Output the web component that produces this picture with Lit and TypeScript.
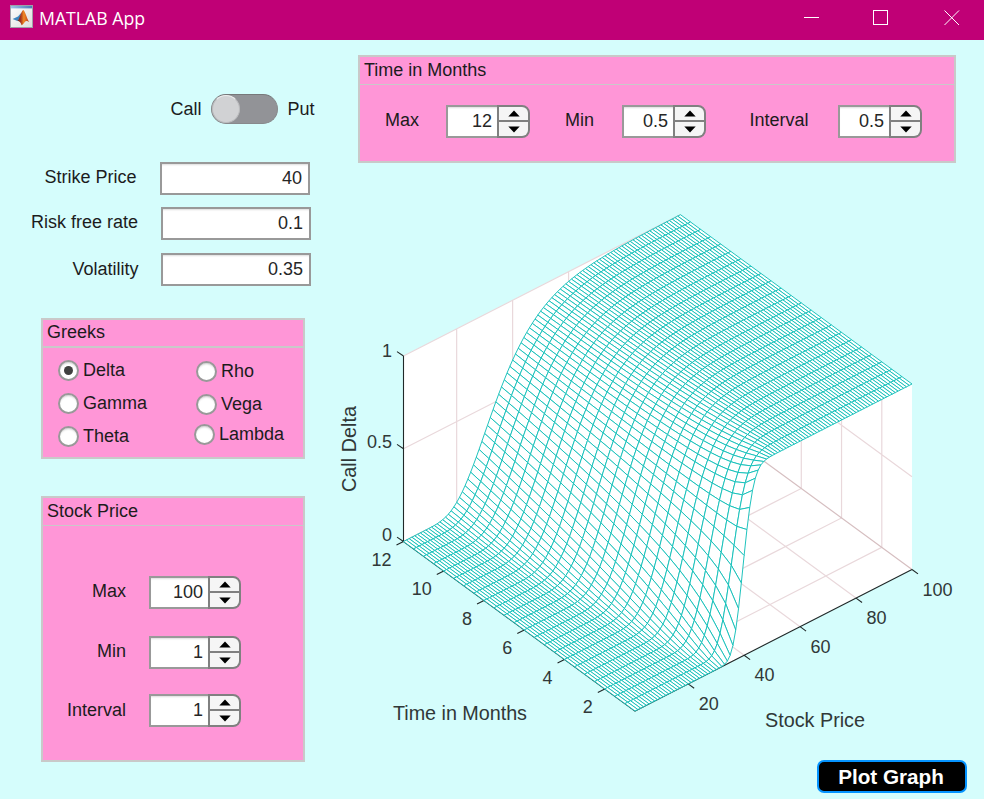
import { LitElement, html, svg, css } from "lit";
import { customElement, property } from "lit/decorators.js";

/* ---------- option model ---------- */

const STRIKE = 40;
const RATE = 0.1;
const VOL = 0.35;

function normCdf(x: number): number {
  const z = Math.abs(x) / Math.SQRT2;
  const t = 1 / (1 + 0.3275911 * z);
  const erf =
    1 -
    ((((1.061405429 * t - 1.453152027) * t + 1.421413741) * t - 0.284496736) * t + 0.254829592) *
      t *
      Math.exp(-z * z);
  return x >= 0 ? 0.5 * (1 + erf) : 0.5 * (1 - erf);
}

function callDelta(stock: number, months: number): number {
  const T = months / 12;
  const d1 = (Math.log(stock / STRIKE) + (RATE + (VOL * VOL) / 2) * T) / (VOL * Math.sqrt(T));
  return normCdf(d1);
}

/* ---------- projection (plot-local pixels) ---------- */

function project(s: number, t: number, z: number): [number, number] {
  const a = (s - 1) / 99;
  const b = (t - 0.5) / 11.5;
  return [296 + 277 * a - 231.5 * b, 541 - 141.5 * a - 169.5 * b - 185.5 * z];
}

const pt = (p: [number, number]) => p[0].toFixed(2) + " " + p[1].toFixed(2);
const seg = (...ps: [number, number][]) => "M" + ps.map(pt).join("L");

function surfaceCells(): string[] {
  const cells: string[] = [];
  for (let s = 99; s >= 1; s--) {
    for (let k = 23; k >= 1; k--) {
      const t0 = k * 0.5;
      const t1 = t0 + 0.5;
      const c = (a: number, b: number) => project(a, b, callDelta(a, b));
      cells.push(seg(c(s, t0), c(s + 1, t0), c(s + 1, t1), c(s, t1)) + "Z");
    }
  }
  return cells;
}

const CELLS = surfaceCells();
const STOCK_TICKS = [20, 40, 60, 80, 100];
const MONTH_TICKS = [2, 4, 6, 8, 10, 12];

const GRID = [
  ...[20, 40, 60, 80].map((s) => seg(project(s, 0.5, 0), project(s, 12, 0), project(s, 12, 1))),
  ...[2, 4, 6, 8, 10].map((t) => seg(project(1, t, 0), project(100, t, 0), project(100, t, 1))),
  seg(project(1, 12, 0.5), project(100, 12, 0.5), project(100, 0.5, 0.5)),
  seg(project(1, 12, 1), project(100, 12, 1)),
].join("");

const WALLS =
  seg(
    project(1, 12, 1),
    project(100, 12, 1),
    project(100, 0.5, 1),
    project(100, 0.5, 0),
    project(1, 0.5, 0),
    project(1, 12, 0)
  ) + "Z";

const tick = (p: [number, number], dx: number, dy: number) => seg(p, [p[0] + dx, p[1] + dy]);

const AXES = [
  seg(project(1, 12, 1), project(1, 12, 0)),
  seg(project(1, 12, 0), project(1, 0.5, 0), project(100, 0.5, 0)),
  ...STOCK_TICKS.map((s) => tick(project(s, 0.5, 0), 6, 4.4)),
  ...MONTH_TICKS.map((t) => tick(project(1, t, 0), -7, 3.6)),
  ...[0, 0.5, 1].map((z) => tick(project(1, 12, z), -6.5, -4.4)),
].join("");

@customElement("delta-plot")
class DeltaPlot extends LitElement {
  static styles = css`
    :host { display: block; }
    svg { display: block; }
    .walls { fill: #fff; }
    .grid { fill: none; stroke: #e9d8db; stroke-width: 1.2; }
    .back { fill: none; stroke: #d6bfc1; stroke-width: 1.2; }
    .cell { fill: #fff; stroke: #14c0b9; stroke-width: 0.95; stroke-linejoin: round; }
    .axis { fill: none; stroke: #202828; stroke-width: 1.1; }
    text { font-family: "Liberation Sans", Arial, sans-serif; font-size: 18px; fill: #303838; }
    .end { text-anchor: end; }
    .name { font-size: 19.8px; }
  `;

  render() {
    return html`<svg width="645" height="580" viewBox="0 0 645 580">
      <path class="walls" d=${WALLS}></path>
      <path class="grid" d=${GRID}></path>
      <path class="back" d=${seg(project(1, 12, 0), project(100, 12, 0), project(100, 0.5, 0))}></path>
      <path class="axis" d=${AXES}></path>
      ${CELLS.map((d) => svg`<path class="cell" d=${d}></path>`)}
      <text class="end" x="53" y="187">1</text>
      <text class="end" x="53" y="278">0.5</text>
      <text class="end" x="53" y="371">0</text>
      ${MONTH_TICKS.map((t) => {
        const p = project(1, t, 0);
        return svg`<text class="end" x=${p[0] - 12} y=${p[1] + 24.5}>${t}</text>`;
      })}
      ${STOCK_TICKS.map((s) => {
        const p = project(s, 0.5, 0);
        return svg`<text x=${p[0] + 10.5} y=${p[1] + 26}>${s}</text>`;
      })}
      <text class="name" x="54" y="550" textLength="134">Time in Months</text>
      <text class="name" x="426" y="557" textLength="100">Stock Price</text>
      <text class="name" transform="translate(17 322) rotate(-90)" textLength="86">Call Delta</text>
    </svg>`;
  }
}

@customElement("num-spinner")
class NumSpinner extends LitElement {
  @property() value = "";
  static styles = css`
    :host { display: flex; width: 84px; height: 33px; box-sizing: border-box; color: #262626; }
    .value {
      flex: 1; box-sizing: border-box; border: 2px solid #999; border-right: 0; background: #fff;
      box-shadow: inset 0 2px 2px -1px #ddd; text-align: right; padding-right: 5px;
      font-size: 18px; line-height: 29px;
    }
    .buttons {
      width: 33px; box-sizing: border-box; display: grid; grid-template-rows: 13px 14px; gap: 2px;
      border: 2px solid #808080; border-radius: 0 8px 8px 0; background: #808080; overflow: hidden;
    }
    .half { background: #f5f5f5; display: flex; align-items: center; justify-content: center; }
    svg { display: block; }
  `;
  render() {
    return html`<div class="value">${this.value}</div>
      <div class="buttons">
        <div class="half"><svg width="12" height="7"><path d="M0.3 6.4 6 0.5l5.7 5.9z"></path></svg></div>
        <div class="half"><svg width="12" height="7"><path d="M0.3 0.6 6 6.5l5.7-5.9z"></path></svg></div>
      </div>`;
  }
}

@customElement("app-root")
class AppRoot extends LitElement {
  static styles = css`
    :host {
      display: flex; flex-direction: column; width: 984px; height: 799px; overflow: hidden;
      background: #d5fdfc; color: #1c1c1c;
      font-family: "Liberation Sans", Arial, sans-serif; font-size: 18px; line-height: 20px;
    }
    * { box-sizing: border-box; }
    .titlebar { height: 40px; flex: none; background: #c00076; color: #fff; display: flex; align-items: flex-start; padding: 5px 24px 0 10px; }
    .title { font-family: "Open Sans", "Noto Sans", sans-serif; font-size: 17.7px; line-height: 24px; margin: 1px auto 0 6px; white-space: nowrap; }
    .controls { display: flex; gap: 54px; margin-top: 5px; }
    .controls .close { margin-left: 2px; }
    .controls svg { fill: none; stroke: #fff; stroke-width: 1; }
    .body { flex: 1; display: flex; }
    .left { width: 339px; flex: none; display: flex; flex-direction: column; align-items: flex-start; padding-top: 54px; }
    .switch { display: flex; align-items: center; gap: 9.5px; margin-left: 170.5px; height: 30px; }
    .track { width: 67px; height: 30px; border-radius: 15px; background: #929397; border: 1px solid #88898c; border-top-color: #77787a; padding: 0; }
    .thumb { width: 28px; height: 28px; border-radius: 50%; background: #d1d2d4; border: 1px solid #bcbdbf; border-top-color: #eee; }
    .fields { display: grid; padding-top: 38px; }
    .field { display: grid; grid-template-columns: 136.5px 150px; column-gap: 23.5px; height: 33px; }
    .field.two { margin-top: 12px; grid-template-columns: 138px 150px; column-gap: 23px; }
    .field.three { margin-top: 13px; grid-template-columns: 138.5px 150px; column-gap: 22.5px; }
    .label { text-align: right; line-height: 30px; white-space: nowrap; }
    .two .label { line-height: 30px; }
    .three .label { line-height: 32px; }
    .box { border: 2px solid #999; background: #fff; box-shadow: inset 0 2px 2px -1px #ddd; text-align: right; padding-right: 6px; line-height: 29px; color: #262626; }
    .panel { background: #ff96d7; border: 2px solid #c9c9c9; }
    .head { border-bottom: 1px solid #c9c9c9; padding-left: 4px; height: 28px; line-height: 26px; }
    .greeks { width: 264px; height: 141px; margin: 32px 0 0 41px; }
    .greeks .head { border-bottom-width: 2px; height: 28px; line-height: 24px; }
    .radios { display: flex; padding-left: 15px; }
    .col { display: grid; gap: 12px; padding-top: 12px; width: 138px; align-content: start; }
    .col.second { padding-top: 13px; width: 100px; }
    .radio { display: flex; align-items: center; gap: 4px; height: 21px; line-height: 18px; white-space: nowrap; }
    .radio span { margin-top: -2px; }
    .radio.lambda { margin: -3px 0 0 -2px; }
    .dot { width: 21px; height: 21px; flex: none; border-radius: 50%; border: 2px solid #999; background: #fff; display: grid; place-items: center; box-shadow: inset 0 2px 2px -1px #ccc; }
    .dot.on::after { content: ""; width: 9px; height: 9px; border-radius: 50%; background: #404040; }
    .stock { width: 264px; height: 266px; margin: 37px 0 0 41px; }
    .stock .head, .time .head { height: 28px; line-height: 26px; }
    .stock .rows { display: grid; grid-template-columns: 83px 92px; column-gap: 23px; grid-template-rows: 60px 58px 33px; padding-top: 50px; }
    .stock num-spinner { width: 92px; }
    .stock .label { line-height: 31px; }
    .stock .label.last { line-height: 33px; }
    .right { flex: 1; display: flex; flex-direction: column; align-items: flex-start; padding-top: 15px; }
    .time { width: 598px; height: 108px; margin-left: 19px; }
    .time .head { line-height: 26px; }
    .time .rows { display: flex; padding: 20px 0 0 25px; }
    .time .label { text-align: left; line-height: 31px; }
    .time .max { width: 61px; }
    .time .min { width: 57px; margin-left: 35px; }
    .time .interval { width: 88.5px; margin-left: 43.5px; }
    delta-plot { margin-top: 7px; height: 580px; }
    .plot { width: 150px; height: 33px; margin: 10px 0 0 478px; padding-right: 2px; border: 2px solid #0493ff; border-radius: 7px; background: #000; color: #fff; font-size: 20.7px; font-weight: 700; text-align: center; line-height: 30px; white-space: nowrap; }
  `;

  radio(name: string, on = false, cls = "") {
    return html`<div class="radio ${cls}"><div class="dot ${on ? "on" : ""}"></div><span>${name}</span></div>`;
  }

  render() {
    return html`
      <div class="titlebar">
        <svg width="23" height="23" viewBox="0 0 23 23">
          <defs>
            <linearGradient id="paper" x2="1" y2="1"><stop offset="0" stop-color="#fff"/><stop offset="1" stop-color="#dcdcdc"/></linearGradient>
            <linearGradient id="bar"><stop offset="0" stop-color="#9cc3e6"/><stop offset="1" stop-color="#4a7cb8"/></linearGradient>
            <linearGradient id="flame"><stop offset="0" stop-color="#5c2a2c"/><stop offset=".3" stop-color="#a8341c"/><stop offset=".55" stop-color="#f08a24"/><stop offset="1" stop-color="#b8321a"/></linearGradient>
          </defs>
          <rect x=".5" y=".5" width="22" height="22" fill="url(#paper)" stroke="#a0a0a8"/>
          <rect x="1" y="1" width="21" height="2.4" fill="url(#bar)"/>
          <path d="M2.600 14 8 11.400 11.500 7.500 10 13 7.400 16z" fill="#3d86c0"/>
          <path d="M7.300 15.800C9.800 14.500 11 6 13.200 5c2 .6 3.500 8.500 6 12-2-1.500-3.500-1.400-4.600.2-1 1.400-1.700 2.300-3 3.100-.5-2.200-1.900-4.300-4.300-4.500z" fill="url(#flame)"/>
        </svg>
        <div class="title">MATLAB App</div>
        <div class="controls">
          <svg width="15" height="16"><path d="M0 7.500H15"/></svg>
          <svg width="15" height="16"><rect x=".5" y=".5" width="14" height="14"/></svg>
          <svg class="close" width="16" height="16"><path d="M.5.5l14.500 14.500M15 .5l-14.500 14.500"/></svg>
        </div>
      </div>
      <div class="body">
        <div class="left">
          <div class="switch"><span>Call</span><div class="track"><div class="thumb"></div></div><span>Put</span></div>
          <div class="fields">
            <div class="field"><div class="label">Strike Price</div><div class="box">40</div></div>
            <div class="field two"><div class="label">Risk free rate</div><div class="box">0.1</div></div>
            <div class="field three"><div class="label">Volatility</div><div class="box">0.35</div></div>
          </div>
          <div class="panel greeks">
            <div class="head">Greeks</div>
            <div class="radios">
              <div class="col">${this.radio("Delta", true)}${this.radio("Gamma")}${this.radio("Theta")}</div>
              <div class="col second">${this.radio("Rho")}${this.radio("Vega")}${this.radio("Lambda", false, "lambda")}</div>
            </div>
          </div>
          <div class="panel stock">
            <div class="head">Stock Price</div>
            <div class="rows">
              <div class="label">Max</div><num-spinner value="100"></num-spinner>
              <div class="label">Min</div><num-spinner value="1"></num-spinner>
              <div class="label last">Interval</div><num-spinner value="1"></num-spinner>
            </div>
          </div>
        </div>
        <div class="right">
          <div class="panel time">
            <div class="head">Time in Months</div>
            <div class="rows">
              <div class="label max">Max</div><num-spinner value="12"></num-spinner>
              <div class="label min">Min</div><num-spinner value="0.5"></num-spinner>
              <div class="label interval">Interval</div><num-spinner value="0.5"></num-spinner>
            </div>
          </div>
          <delta-plot></delta-plot>
          <div class="plot">Plot Graph</div>
        </div>
      </div>`;
  }
}
